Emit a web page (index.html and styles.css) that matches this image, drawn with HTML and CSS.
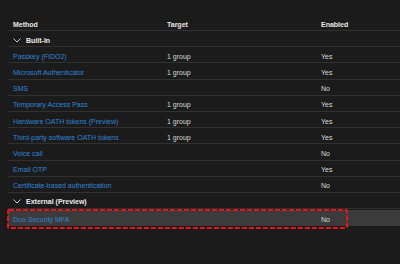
FILE: index.html
```html
<!DOCTYPE html>
<html>
<head>
<meta charset="utf-8">
<link rel="stylesheet" href="styles.css">
</head>
<body>
<div class="page">
  <div class="table">
    <div class="row head">
      <div class="cell">Method</div>
      <div class="cell">Target</div>
      <div class="cell">Enabled</div>
    </div>
    <div class="row group">
      <div class="cell"><svg class="chev" width="8" height="5" viewBox="0 0 8 5"><polyline points="0.5,0.5 4,4 7.5,0.5" fill="none" stroke="#c8c8c8" stroke-width="1"/></svg>Built-In</div>
    </div>
    <div class="row"><div class="cell link">Passkey (FIDO2)</div><div class="cell">1 group</div><div class="cell">Yes</div></div>
    <div class="row"><div class="cell link">Microsoft Authenticator</div><div class="cell">1 group</div><div class="cell">Yes</div></div>
    <div class="row"><div class="cell link">SMS</div><div class="cell"></div><div class="cell">No</div></div>
    <div class="row"><div class="cell link">Temporary Access Pass</div><div class="cell">1 group</div><div class="cell">Yes</div></div>
    <div class="row"><div class="cell link">Hardware OATH tokens (Preview)</div><div class="cell">1 group</div><div class="cell">Yes</div></div>
    <div class="row"><div class="cell link">Third-party software OATH tokens</div><div class="cell">1 group</div><div class="cell">Yes</div></div>
    <div class="row"><div class="cell link">Voice call</div><div class="cell"></div><div class="cell">No</div></div>
    <div class="row"><div class="cell link">Email OTP</div><div class="cell"></div><div class="cell">Yes</div></div>
    <div class="row"><div class="cell link">Certificate-based authentication</div><div class="cell"></div><div class="cell">No</div></div>
    <div class="row group">
      <div class="cell"><svg class="chev" width="8" height="5" viewBox="0 0 8 5"><polyline points="0.5,0.5 4,4 7.5,0.5" fill="none" stroke="#c8c8c8" stroke-width="1"/></svg>External (Preview)</div>
    </div>
    <div class="row selected">
      <div class="cell link">Duo Security MFA</div><div class="cell"></div><div class="cell">No</div>
      <svg class="mark" width="341" height="20" viewBox="0 0 341 20"><rect x="1" y="1" width="339" height="18" rx="1" fill="none" stroke="#e8141b" stroke-width="2" stroke-dasharray="5 2"/></svg>
    </div>
  </div>
</div>
</body>
</html>
```
FILE: styles.css
```css
html, body {
  margin: 0;
  padding: 0;
  background: #1b1b1b;
}
.page {
  width: 400px;
  height: 264px;
  padding: 15px 0 0 8px;
  box-sizing: border-box;
  font-family: "Liberation Sans", Arial, sans-serif;
  font-size: 7px;
  color: #dadada;
}
.table {
  display: flex;
  flex-direction: column;
}
.row {
  display: grid;
  grid-template-columns: 154px 154px 1fr;
  height: 15.2px;
  border-bottom: 1px solid #313131;
  align-items: center;
  position: relative;
}
.row.head {
  height: 15px;
  color: #e8e8e8;
  font-weight: bold;
  align-items: end;
}
.row.head .cell {
  padding-top: 0;
  padding-bottom: 2px;
}
.cell {
  padding-left: 5px;
  padding-top: 3px;
  white-space: nowrap;
  display: flex;
  align-items: center;
}
.link {
  color: #3184d6;
}
.group .cell {
  color: #ececec;
  font-weight: bold;
}
.chev {
  margin-right: 5px;
}
.selected {
  background: #3b3b3b;
  border-bottom-color: #3b3b3b;
  margin-top: 1px;
}
.mark {
  position: absolute;
  left: -1px;
  top: -1px;
}
```
